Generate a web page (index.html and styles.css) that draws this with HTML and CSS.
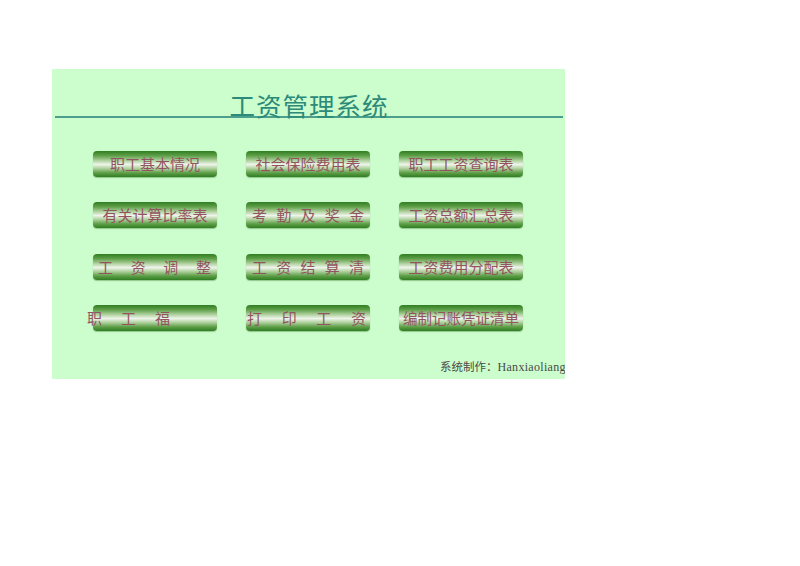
FILE: index.html
```html
<!DOCTYPE html>
<html lang="zh">
<head>
<meta charset="utf-8">
<title>工资管理系统</title>
<link rel="stylesheet" href="styles.css">
</head>
<body>
<div class="panel">
  <div class="title-bar">
    <h1 class="title">工资管理系统</h1>
  </div>
  <div class="grid">
    <div class="btn"><span>职工基本情况</span></div>
    <div class="btn"><span>社会保险费用表</span></div>
    <div class="btn"><span>职工工资查询表</span></div>

    <div class="btn"><span>有关计算比率表</span></div>
    <div class="btn spread s5"><span>考</span><span>勤</span><span>及</span><span>奖</span><span>金</span></div>
    <div class="btn"><span>工资总额汇总表</span></div>

    <div class="btn spread s4"><span>工</span><span>资</span><span>调</span><span>整</span></div>
    <div class="btn spread s5"><span>工</span><span>资</span><span>结</span><span>算</span><span>清</span></div>
    <div class="btn"><span>工资费用分配表</span></div>

    <div class="btn spread welfare"><span class="first">职</span><span>工</span><span>福</span></div>
    <div class="btn spread print"><span>打</span><span>印</span><span>工</span><span>资</span></div>
    <div class="btn tight"><span>编制记账凭证清单</span></div>
  </div>
  <div class="footer">系统制作：<span class="latin">Hanxiaoliang</span></div>
</div>
</body>
</html>
```
FILE: styles.css
```css
html, body {
  margin: 0;
  padding: 0;
  background: #ffffff;
}
body {
  width: 800px;
  height: 566px;
  overflow: hidden;
  font-family: "Noto Sans CJK SC", "Liberation Serif", serif;
}
.panel {
  margin: 69px 0 0 52px;
  width: 513px;
  height: 310px;
  background: #ccfdcc;
  overflow: hidden;
  position: relative;
}
.title-bar {
  margin: 0 2px 0 3px;
  height: 47px;
  border-bottom: 2px solid #4c9f8c;
  display: flex;
  justify-content: center;
  align-items: flex-end;
}
.title {
  margin: 0 0 -4px 0;
  font-weight: 400;
  font-size: 25.5px;
  letter-spacing: 1px;
  line-height: 30px;
  color: #2b8a79;
}
.grid {
  margin: 33px 0 0 41px;
  display: grid;
  grid-template-columns: repeat(3, 124px);
  grid-auto-rows: 26px;
  column-gap: 29px;
  row-gap: 25.3px;
}
.btn {
  border-radius: 4px;
  background: linear-gradient(to bottom,
    #2f7d22 0%,
    #5e9f48 18%,
    #b4d4a4 38%,
    #eef4ea 52%,
    #b4d4a4 66%,
    #5e9f48 84%,
    #2f7d22 100%);
  box-shadow: 0 1px 1px rgba(40, 100, 30, 0.35);
  display: flex;
  align-items: center;
  justify-content: center;
  color: #935462;
  font-size: 15px;
  font-weight: 400;
  line-height: 26px;
  white-space: nowrap;
}
.btn.tight {
  font-size: 14.5px;
}
.spread {
  justify-content: space-between;
  padding: 0 6px 0 5px;
}
.spread.s5 {
  padding: 0 6px 0 6px;
}
.spread.welfare {
  justify-content: flex-start;
  padding: 0;
  gap: 19px;
}
.spread.welfare .first {
  margin-left: -6px;
}
.spread.print {
  padding: 0 4px 0 1px;
}
.footer {
  position: absolute;
  left: 388px;
  top: 289px;
  font-size: 11.5px;
  color: #4a4a4a;
  white-space: nowrap;
  font-weight: 400;
}
.footer .latin {
  font-family: "Liberation Serif", serif;
  font-size: 12px;
  letter-spacing: 0.3px;
}
```
